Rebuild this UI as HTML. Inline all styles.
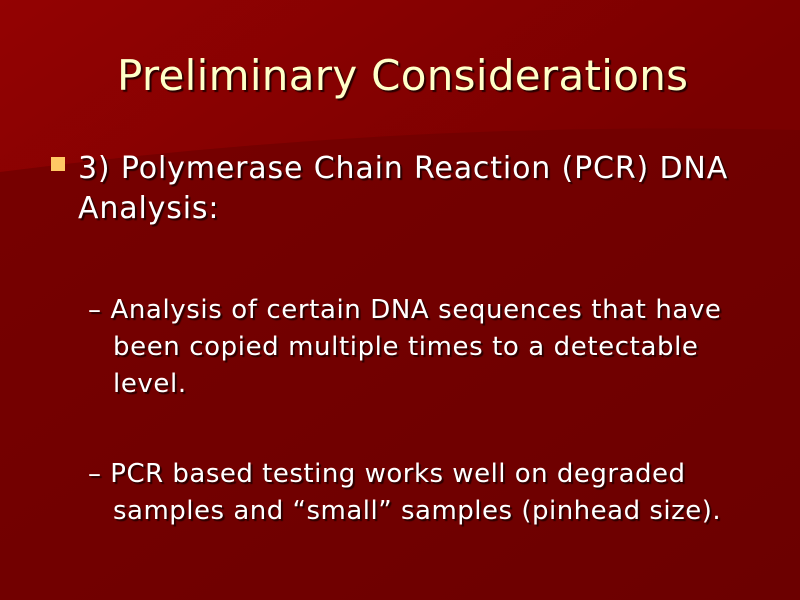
<!DOCTYPE html>
<html><head><meta charset="utf-8"><style>
html,body{margin:0;padding:0}
body{width:800px;height:600px;position:relative;overflow:hidden;font-family:"DejaVu Sans","Liberation Sans",sans-serif;color:#fff}
.t{position:absolute;white-space:nowrap;text-shadow:2px 2px 1px #2a0000}
</style></head><body>
<svg width="800" height="600" style="position:absolute;left:0;top:0">
<defs>
<linearGradient id="g1" x1="0" y1="0" x2="1" y2="0.3"><stop offset="0" stop-color="#930202"/><stop offset="1" stop-color="#7a0000"/></linearGradient>
<linearGradient id="g2" x1="0" y1="0" x2="1" y2="1"><stop offset="0" stop-color="#780000"/><stop offset="1" stop-color="#6c0000"/></linearGradient>
</defs>
<rect width="800" height="600" fill="url(#g2)"/>
<path d="M0 0 H800 V130 Q400 120 0 172 Z" fill="url(#g1)"/>
</svg>
<div class="t" style="left:117px;top:51px;font-size:42px;color:#ffffc8;letter-spacing:0.3px">Preliminary Considerations</div>
<div style="position:absolute;left:51px;top:157px;width:14px;height:14px;background:#ffc864"></div>
<div class="t" style="left:78px;top:151px;font-size:30px;letter-spacing:0.85px">3) Polymerase Chain Reaction (PCR) DNA</div>
<div class="t" style="left:78px;top:191px;font-size:30px;letter-spacing:0.85px">Analysis:</div>
<div class="t" style="left:88px;top:295px;font-size:26px;letter-spacing:0.6px">– Analysis of certain DNA sequences that have</div>
<div class="t" style="left:113px;top:332px;font-size:26px;letter-spacing:0.6px">been copied multiple times to a detectable</div>
<div class="t" style="left:113px;top:369px;font-size:26px;letter-spacing:0.6px">level.</div>
<div class="t" style="left:88px;top:459px;font-size:26px;letter-spacing:0.5px">– PCR based testing works well on degraded</div>
<div class="t" style="left:113px;top:496px;font-size:26px;letter-spacing:0.5px">samples and “small” samples (pinhead size).</div>
</body></html>
